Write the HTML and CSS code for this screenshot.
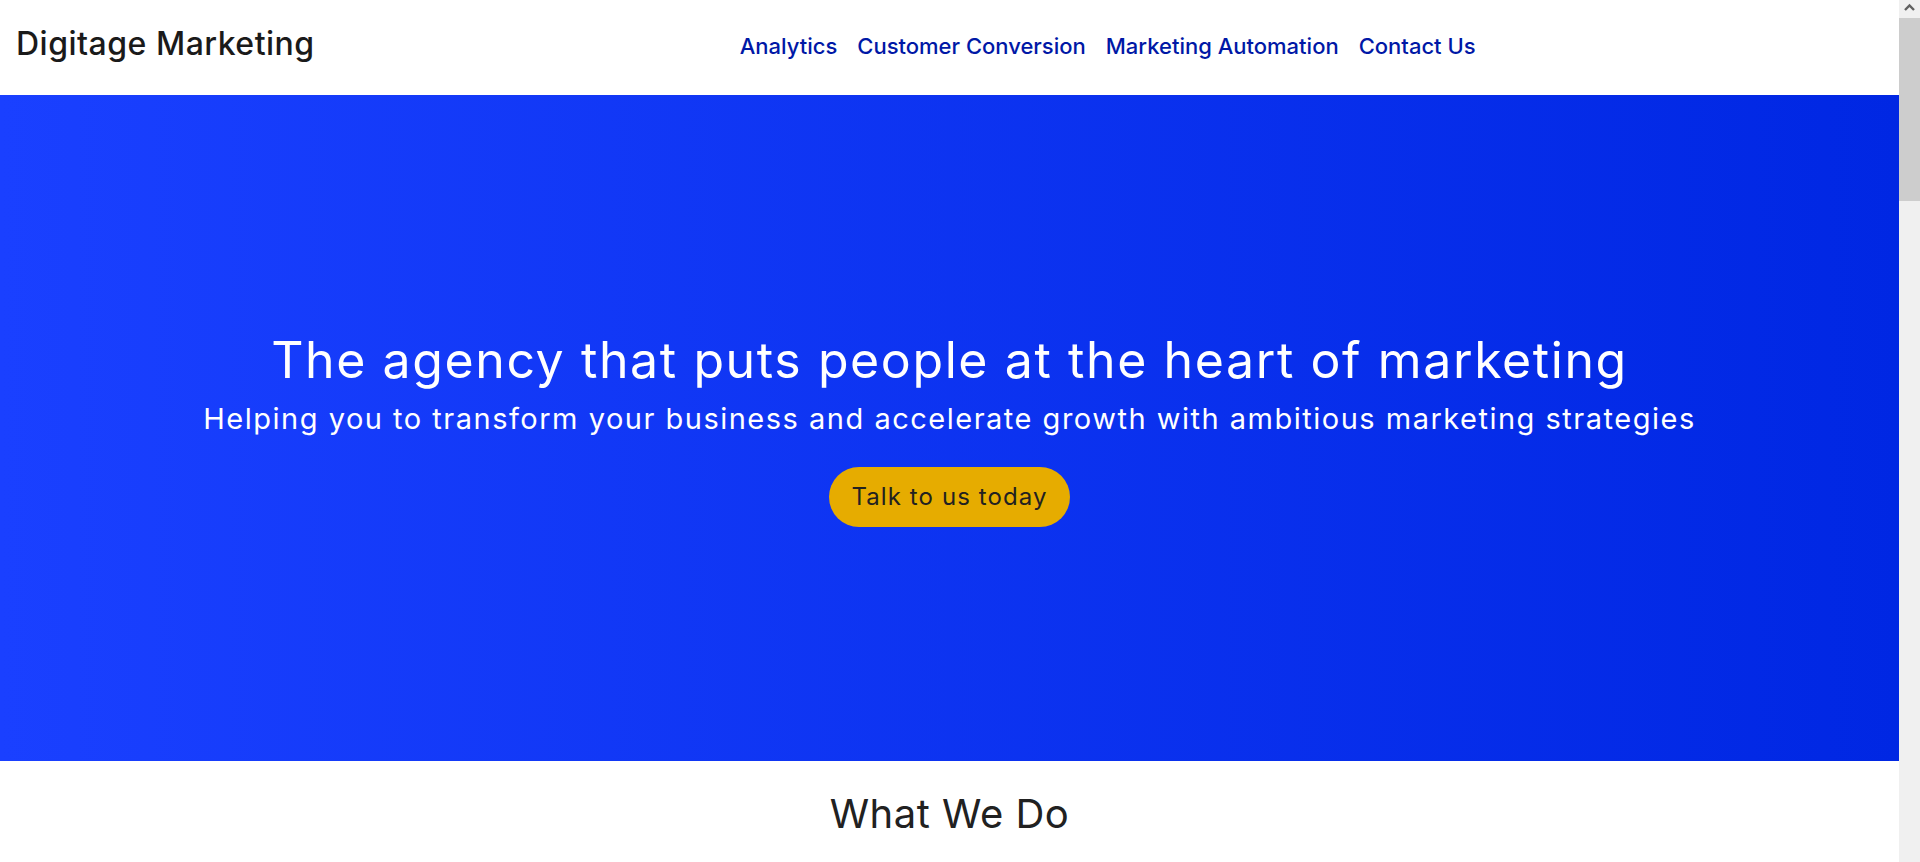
FILE: index.html
```html
<!DOCTYPE html>
<html lang="en">
<head>
<meta charset="utf-8">
<title>Digitage Marketing</title>
<link rel="stylesheet" href="styles.css">
</head>
<body>
<header class="site-header">
  <a class="brand" href="#">Digitage Marketing</a>
  <nav class="main-nav">
    <a href="#analytics">Analytics</a>
    <a href="#conversion">Customer Conversion</a>
    <a href="#automation">Marketing Automation</a>
    <a href="#contact">Contact Us</a>
  </nav>
</header>
<section class="hero">
  <h1 class="hero-title">The agency that puts people at the heart of marketing</h1>
  <p class="hero-sub">Helping you to transform your business and accelerate growth with ambitious marketing strategies</p>
  <a class="cta" href="#contact">Talk to us today</a>
</section>
<section class="what-we-do">
  <h2 class="section-title">What We Do</h2>
  <div class="services">
    <article class="service" id="analytics">
      <h3>Analytics</h3>
      <p>Understand your customers with data-driven insights that shape every campaign.</p>
    </article>
    <article class="service" id="conversion">
      <h3>Customer Conversion</h3>
      <p>Turn visitors into loyal customers with journeys designed around people.</p>
    </article>
    <article class="service" id="automation">
      <h3>Marketing Automation</h3>
      <p>Scale your reach with smart, automated marketing that stays personal.</p>
    </article>
  </div>
</section>
<section class="contact" id="contact">
  <h2 class="section-title">Contact Us</h2>
  <p>Get in touch to find out how we can help your business grow.</p>
</section>
<div class="fake-scrollbar" aria-hidden="true">
  <div class="sb-arrow">
    <svg width="21" height="18" viewBox="0 0 21 18"><path d="M6 10 L10.5 5.5 L15 10" fill="none" stroke="#606060" stroke-width="2.4"/></svg>
  </div>
  <div class="sb-thumb"></div>
</div>
</body>
</html>
```

FILE: styles.css
```css
html {
  scrollbar-width: none;
}
::-webkit-scrollbar {
  display: none;
}
body {
  margin: 0 21px 0 0;
  font-family: Inter, "Open Sans", sans-serif;
  color: #212121;
  background: #fff;
}
a {
  text-decoration: none;
}
.site-header {
  height: 95px;
  display: flex;
  align-items: flex-start;
  padding: 24px 16px 0;
  box-sizing: border-box;
}
.brand {
  font-size: 32px;
  line-height: 40px;
  font-weight: 500;
  color: #1a1a1a;
  letter-spacing: 0.5px;
}
.main-nav {
  display: flex;
  gap: 20px;
  margin-left: 425px;
  margin-top: 9px;
}
.main-nav a {
  font-size: 22px;
  line-height: 26px;
  font-weight: 500;
  color: #0018a6;
}
.hero {
  height: 666px;
  background: linear-gradient(to right, #1a40ff, #0027e3);
  color: #fff;
  display: flex;
  flex-direction: column;
  align-items: center;
  justify-content: center;
  text-align: center;
}
.hero-title {
  margin: 0;
  font-size: 50px;
  font-weight: 400;
  line-height: 60px;
  letter-spacing: 1.6px;
}
.hero-sub {
  margin: 9px 0 0;
  font-size: 29px;
  font-weight: 400;
  line-height: 40px;
  letter-spacing: 1.5px;
}
.cta {
  margin-top: 28px;
  display: inline-block;
  background: #e6ac00;
  color: #212121;
  font-size: 24px;
  letter-spacing: 1.1px;
  line-height: 60px;
  height: 60px;
  padding: 0 22px;
  border-radius: 30px;
}
.what-we-do {
  padding-top: 29px;
  text-align: center;
  min-height: 2200px;
}
.section-title {
  margin: 0;
  font-size: 40px;
  font-weight: 400;
  line-height: 48px;
  letter-spacing: 0.5px;
  color: #212121;
}
.services {
  display: flex;
  justify-content: center;
  gap: 32px;
  margin-top: 60px;
}
.service {
  width: 400px;
  padding: 32px;
  border: 1px solid #e2e2e2;
  border-radius: 8px;
}
.contact {
  padding: 60px 0 900px;
  text-align: center;
}
.fake-scrollbar {
  position: fixed;
  top: 0;
  right: 0;
  width: 21px;
  height: 100vh;
  background: #f0f0f0;
  display: flex;
  flex-direction: column;
}
.sb-arrow {
  height: 18px;
}
.sb-arrow svg {
  display: block;
}
.sb-thumb {
  height: 183px;
  background: #cdcdcd;
}
```
